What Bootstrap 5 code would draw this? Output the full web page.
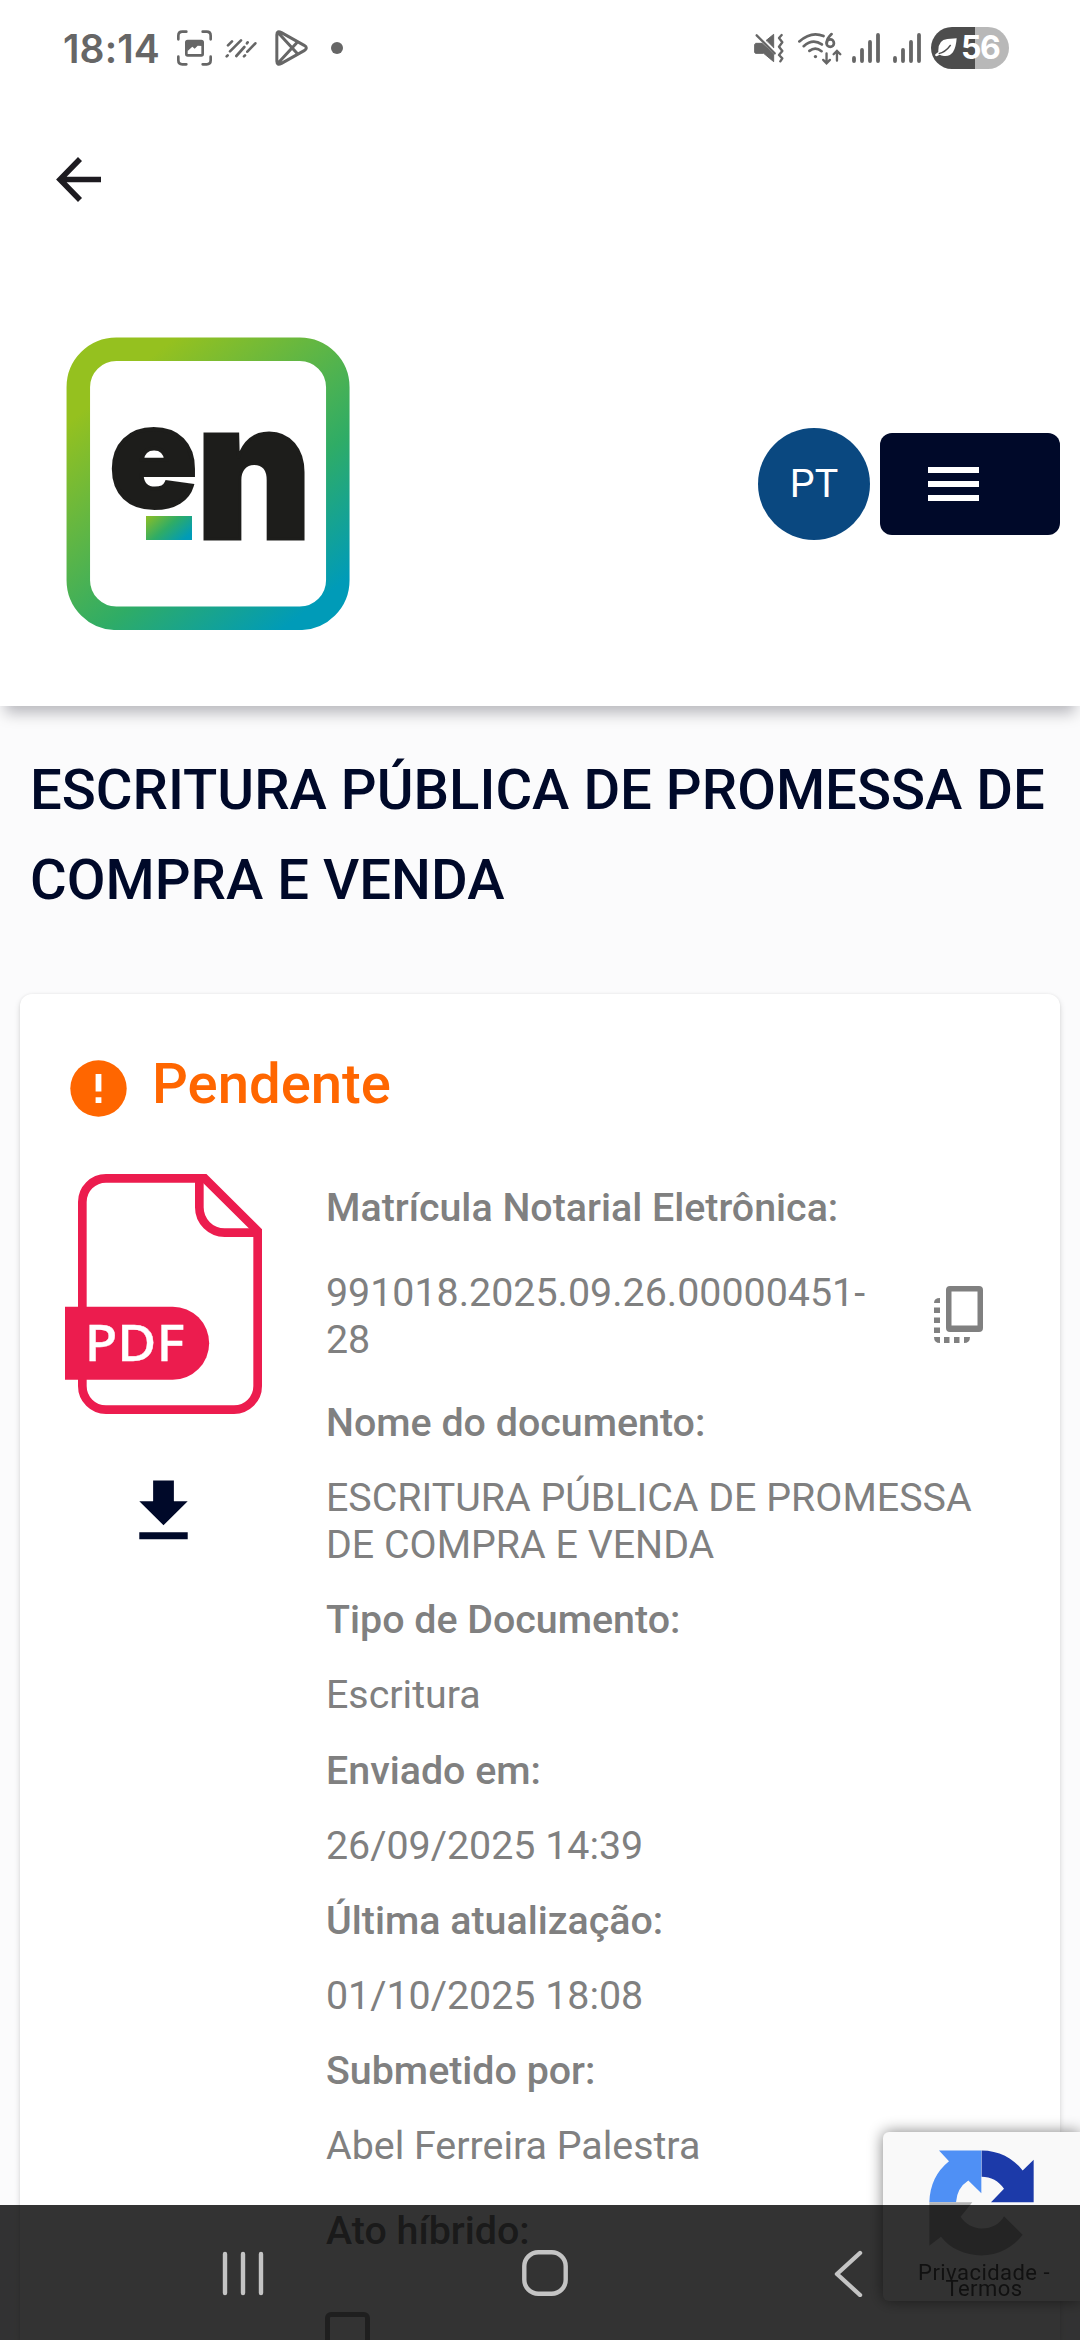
<!DOCTYPE html>
<html lang="pt-BR">
<head>
<meta charset="utf-8">
<meta name="viewport" content="width=device-width, initial-scale=1">
<title>Escritura pública</title>
<link href="https://cdn.jsdelivr.net/npm/bootstrap@5.3.0/dist/css/bootstrap.min.css" rel="stylesheet">
<style>
  :root { --navy: #000929; --ink: #808080; --orange: #ff6600; }
  body { font-family: Roboto, "Liberation Sans", sans-serif; background: #fbfbfc; color: var(--ink); }
  svg { display: block; flex: none; }
  .screen { height: 2340px; overflow: hidden; }
  .status-bar { height: 96px; padding: 0 71px 0 63px; color: #666; flex: none; }
  .clock { font: 600 39px/1 Inter, sans-serif; width: 114px; letter-spacing: .1px; white-space: nowrap; padding-top: 1px; }
  .battery { width: 78px; height: 42px; background: linear-gradient(90deg, #4d4d4d 56%, #b8b8b8 56%); margin-left: 10px; }
  .battery span { font: 700 32px/42px Inter, sans-serif; letter-spacing: -1.5px; }
  .app-bar { height: 166px; padding: 61px 0 0 56px; flex: none; }
  .site-header { height: 444px; padding: 75px 20px 76px 66px; position: relative; flex: none; box-shadow: 0 12px 14px -5px rgba(0, 5, 20, .27); }
  .avatar { width: 112px; height: 112px; background: #0a4880; font-size: 39.375px; }
  .menu-btn { width: 180px; height: 102px; border-radius: 12px; background: var(--navy); border: 0; padding: 0 0 0 48px; margin-left: 10px; }
  .page-title { font-size: 56.25px; font-weight: 500; line-height: 90px; color: var(--navy); padding: 39px 0 0 30px; margin: 0; height: 288px; flex: none; }
  .doc-card { margin: 0 20px; min-height: 0; border: 0; border-radius: 12px 12px 0 0; box-shadow: 0 3px 6px rgba(0, 0, 0, .14), 0 0 3px rgba(0, 0, 0, .06); }
  .state { padding: 57px 50px 0; gap: 25px; height: 180px; flex: none; color: var(--orange); font-size: 56.25px; font-weight: 500; line-height: 66px; }
  .file-col { width: 197px; margin-left: 45px; }
  .info { margin-left: 64px; padding-top: 10px; width: 680px; font-size: 39.375px; line-height: 47px; }
  .info dt { font-weight: 500; margin-bottom: 28.2px; }
  .info dd { margin: 0 0 28.2px; }
  .info .code-row { margin: 37.5px 0 36.3px; }
  .code-row span { width: 608px; }
  .code-row svg { margin-bottom: 2px; }
  .tick { width: 45px; height: 45px; border: 5px solid #999; border-radius: 6px; margin-left: -1px; }
  .captcha { right: 0; bottom: 39px; width: 197px; height: 169px; background: #f9f9f9; border-radius: 6px 0 0 6px; box-shadow: 0 0 15px gray; font-size: 22px; line-height: 16px; color: #555; padding-top: 18px; letter-spacing: .45px; z-index: 5; }
  .captcha svg { margin-left: 46px; }
  .captcha p { margin: 9px 0 0 5px; white-space: nowrap; }
  .system-nav { height: 135px; background: rgba(0, 0, 0, .8); z-index: 10; padding: 0 217px 0 222px; }
</style>
</head>
<body>
<div class="screen d-flex flex-column">
<div class="status-bar d-flex align-items-center bg-white">
  <div class="clock">18:14</div>
  <svg width="35" height="36" viewBox="411 62 105 106" fill="none" stroke="#666" stroke-width="8" stroke-linecap="round"><path d="M415 89V78q0-12 12-12h12M488 66h12q12 0 12 12v11M512 141v11q0 12-12 12h-12M439 164h-12q-12 0-12-12v-11"/><rect x="439" y="94" width="49" height="43" rx="4"/><path d="M439 94h49v15l-15-1-9 9-7-6-15 14z" fill="#666" stroke="none"/></svg>
  <svg style="margin-left:13px" width="32" height="20" viewBox="556 97 96 60" fill="none" stroke="#666" stroke-width="8" stroke-linecap="round"><path d="M561 152l3-3M571 137l33-33M565 119l12-12M590 151l24-27M622 113l2-3M613 152l3-3M623 138l24-25"/></svg>
  <svg style="margin-left:18px" width="33" height="36" viewBox="704 61 98 108" fill="none" stroke="#666" stroke-width="9" stroke-linejoin="round"><path d="M709 75q0-13 14-6l68 38q13 8 0 16l-68 38q-14 7-14-6zM713 69l58 63M713 160l58-63"/></svg>
  <svg style="margin-left:23px" width="12" height="12" viewBox="0 0 12 12"><circle cx="6" cy="6" r="6" fill="#666"/></svg>
  <svg class="ms-auto" width="30" height="30" viewBox="68 68 90 90" fill="none" stroke="#666" stroke-width="7" stroke-linecap="round" stroke-linejoin="round"><path d="M74 99h18l35 33v22l-30-25H74q-4 0-4-4v-22zM105 90l22-18v40z" fill="#666" stroke-width="3"/><path d="M80 73l54 52" stroke="#fff" stroke-width="6"/><path d="M76 75l54 54M151 74l-8 9 10 13-10 13 10 13-10 12 10 10-6 9" /></svg>
  <svg style="margin-left:14px" width="45" height="33" viewBox="202 64 134 98" fill="none" stroke="#666" stroke-width="8" stroke-linecap="round"><path d="M206 92q36-32 72-16M219 106q27-24 54-5M236 120q18-14 36 1M302 70q-15 14-14 26" /><circle cx="298" cy="97" r="11"/><circle cx="254" cy="137" r="5" fill="#666" stroke="none"/><path d="M287 128v28M277 147l10 10 10-10M318 149v-28M308 130l10-10 10 10" stroke-width="7"/></svg>
  <svg style="margin-left:9px" width="28" height="30" viewBox="0 0 28 30" stroke="#666" stroke-width="3.800" stroke-linecap="round"><path d="M2 25v3M10 17v11M18 9v19M26 2v26"/></svg>
  <svg style="margin-left:13px" width="28" height="30" viewBox="0 0 28 30" stroke="#666" stroke-width="3.800" stroke-linecap="round"><path d="M2 25v3M10 17v11M18 9v19M26 2v26"/></svg>
  <div class="battery rounded-pill d-flex align-items-center text-white">
    <svg style="margin:0 4px 0 4px" width="22" height="20" viewBox="613 85 66 60"><path d="M678 86q-4 57-38 53-9-1-13-4l-9 5q-6 0-4-6l9-7q-2-36 27-39z" fill="#fff"/><path d="M624 132q20-4 36-26" fill="none" stroke="#4d4d4d" stroke-width="4"/></svg>
    <span>56</span>
  </div>
</div>
<div class="app-bar bg-white">
  <svg width="45" height="45" viewBox="0 0 45 45" fill="none" stroke="#1d1b20" stroke-width="5.600"><path d="M24 2L4 22.500 24 43M4 22.500H45"/></svg>
</div>
<header class="site-header bg-white d-flex align-items-center">
  <svg width="284" height="293" viewBox="66 337 284 293">
    <defs>
      <linearGradient id="ring" gradientUnits="userSpaceOnUse" x1="100" y1="397" x2="283.500" y2="629"><stop offset="0" stop-color="#95c11f"/><stop offset="0.620" stop-color="#2fac66"/><stop offset="1" stop-color="#009bb8"/></linearGradient>
      <linearGradient id="dash" x1="0" y1="0.1" x2="1" y2="0.7"><stop offset="0" stop-color="#86bd2a"/><stop offset="0.5" stop-color="#2fac66"/><stop offset="1" stop-color="#009bb8"/></linearGradient>
    </defs>
    <rect x="78.300" y="349.300" width="259.500" height="269" rx="38" fill="none" stroke="url(#ring)" stroke-width="23.500"/>
    <g font-family="Inter, sans-serif" font-weight="900" fill="#1d1d1b" stroke="#1d1d1b">
      <text x="109.500" y="507" font-size="141" textLength="87.500" lengthAdjust="spacingAndGlyphs" stroke-width="4">e</text>
      <text x="196" y="539" font-size="192" textLength="116" lengthAdjust="spacingAndGlyphs" stroke-width="3">n</text>
    </g>
    <rect x="146" y="516" width="46" height="24" fill="url(#dash)"/>
  </svg>
  <div class="avatar rounded-circle text-white d-flex align-items-center justify-content-center ms-auto">PT</div>
  <button class="menu-btn" aria-label="Menu">
    <svg width="51" height="34" viewBox="0 0 51 34" fill="#fff"><path d="M0 0h51v6H0zM0 14h51v6H0zM0 28h51v6H0z"/></svg>
  </button>
</header>
<main class="d-flex flex-column flex-grow-1 overflow-hidden">
  <h1 class="page-title">ESCRITURA PÚBLICA DE PROMESSA DE COMPRA E VENDA</h1>
  <section class="card doc-card flex-grow-1">
    <div class="state d-flex align-items-start">
      <svg style="margin-top:9px" width="57" height="57" viewBox="0 0 57 57"><circle cx="28.500" cy="28.500" r="28.200" fill="#f60"/><path d="M25.600 14h5.800v17.500h-5.800zM25.600 37.300h5.800v5.800h-5.800z" fill="#fff"/></svg>
      <span>Pendente</span>
    </div>
    <div class="d-flex align-items-start">
      <div class="file-col d-flex flex-column align-items-center">
        <svg width="197" height="240" viewBox="45 42 591 720">
          <g fill="none" stroke="#ec1c4e" stroke-width="26"><path d="M464 55H168A71 71 0 0 0 97 126V678A71 71 0 0 0 168 749H552A71 71 0 0 0 623 678V213Z"/><path d="M448 55V142A76 76 0 0 0 524 218H623"/></g>
          <path d="M45 440H368A109 109 0 0 1 368 659H45Z" fill="#ec1c4e"/>
          <text x="104" y="603" font-family="Noto Sans, sans-serif" font-size="151" font-weight="500" fill="#fff" stroke="#fff" stroke-width="1" textLength="300" lengthAdjust="spacingAndGlyphs">PDF</text>
        </svg>
        <svg style="margin-top:56px" width="83" height="83" viewBox="0 0 24 24" fill="#000929"><path d="M19 9h-4V3H9v6H5l7 7 7-7zM5 18v2h14v-2H5z"/></svg>
      </div>
      <dl class="info mb-0">
        <dt>Matrícula Notarial Eletrônica:</dt>
        <dd class="code-row d-flex align-items-center">
          <span>991018.2025.09.26.00000451-<br>28</span>
          <svg width="50" height="57" viewBox="0 0 50 57" fill="#808080"><path d="M16 0h29q4 0 4 4v38q0 4-4 4H16q-4 0-4-4V4q0-4 4-4zm1.500 5.500v34h26v-34z" fill-rule="evenodd"/><path d="M6 12v5H0q0-5 6-5M0 21.500h6v5.500H0zM0 31.500h6V37H0zM0 41.500h6V47H0zM0 51h6v6Q0 57 0 51M10 51h5.500v6H10zM20 51h5.500v6H20zM30 51h6q0 6-6 6z"/></svg>
        </dd>
        <dt>Nome do documento:</dt>
        <dd>ESCRITURA PÚBLICA DE PROMESSA<br>DE COMPRA E VENDA</dd>
        <dt>Tipo de Documento:</dt>
        <dd>Escritura</dd>
        <dt>Enviado em:</dt>
        <dd>26/09/2025 14:39</dd>
        <dt>Última atualização:</dt>
        <dd>01/10/2025 18:08</dd>
        <dt>Submetido por:</dt>
        <dd style="margin-bottom:37.500px">Abel Ferreira Palestra</dd>
        <dt style="margin-bottom:58px">Ato híbrido:</dt>
        <dd><div class="tick"></div></dd>
      </dl>
    </div>
  </section>
</main>
</div>
<aside class="captcha position-fixed text-center">
  <svg width="105" height="106" viewBox="207 121 315 317">
    <path d="M237 122H364V250L325 212Q291 234 288 277H208Q210 200 267 154Z" fill="#4f90f5"/>
    <path d="M365 122C415 122 460 145 488 182L521 150V277H393L432 237C417 214 392 201 365 201Z" fill="#1c3aa9"/>
    <path d="M208 277H337L302 321C315 342 340 356 365 356C395 356 420 341 432 319L488 375C460 412 415 437 364 437C315 437 268 415 243 381L208 408Z" fill="#b5b5b5"/>
  </svg>
  <p>Privacidade -<br>Termos</p>
</aside>
<nav class="system-nav fixed-bottom d-flex align-items-center justify-content-between">
  <svg width="42" height="46" viewBox="0 0 42 46" stroke="#c4c4c4" stroke-width="4.400" stroke-linecap="round"><path d="M3 4v39M21 4v39M39 4v39"/></svg>
  <svg style="margin-right:7px" width="46" height="46" viewBox="0 0 46 46"><rect x="2.300" y="2.300" width="41.400" height="41.400" rx="14" fill="none" stroke="#c4c4c4" stroke-width="4.400"/></svg>
  <svg width="30" height="48" viewBox="0 0 30 48" fill="none" stroke="#c4c4c4" stroke-width="4.400" stroke-linecap="round" stroke-linejoin="round"><path d="M27 4L4 25 27 46"/></svg>
</nav>
<script src="https://cdn.jsdelivr.net/npm/bootstrap@5.3.0/dist/js/bootstrap.bundle.min.js"></script>
</body>
</html>
